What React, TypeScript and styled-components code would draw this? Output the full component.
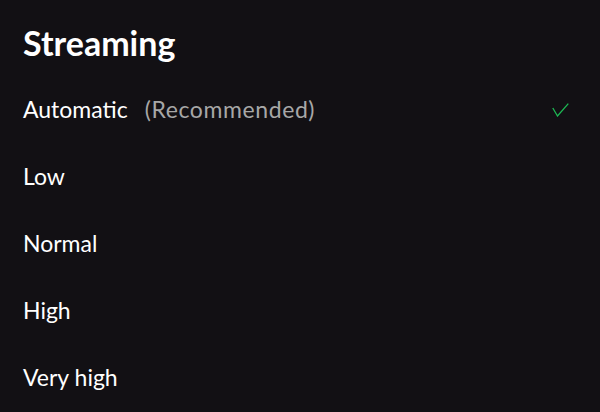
import React from 'react'
import styled, { createGlobalStyle } from 'styled-components'

const GlobalStyle = createGlobalStyle`
  html, body {
    margin: 0;
    padding: 0;
    background: #121014;
  }
  body {
    font-family: Lato, 'Liberation Sans', sans-serif;
    -webkit-font-smoothing: antialiased;
  }
`

const Screen = styled.main`
  width: 600px;
  height: 412px;
  background: #121014;
  box-sizing: border-box;
  padding: 23px 31px 0 23px;
  overflow: hidden;
`

const Title = styled.h1`
  margin: 0 0 13px;
  font-size: 34px;
  font-weight: 700;
  line-height: 40px;
  color: #ffffff;
`

const OptionList = styled.ul`
  list-style: none;
  margin: 0;
  padding: 0;
  display: flex;
  flex-direction: column;
`

const Option = styled.li`
  display: flex;
  align-items: center;
  height: 67px;
  line-height: 67px;
  font-size: 23px;
  color: #ffffff;
`

const Hint = styled.span`
  margin-left: 17px;
  letter-spacing: 0.6px;
  color: #a7a7a7;
`

const Check = styled.svg`
  margin-left: auto;
  width: 17px;
  height: 14px;
`

const options = ['Automatic', 'Low', 'Normal', 'High', 'Very high']

export default function App() {
  return (
    <Screen>
      <GlobalStyle />
      <Title>Streaming</Title>
      <OptionList>
        {options.map((name, i) => (
          <Option key={name}>
            {name}
            {i === 0 && <Hint>(Recommended)</Hint>}
            {i === 0 && (
              <Check viewBox="0 0 17 14">
                <path d="M0.8 5 L5.5 13 L16.3 0.6" fill="none" stroke="#1db954" strokeWidth="1.3" />
              </Check>
            )}
          </Option>
        ))}
      </OptionList>
    </Screen>
  )
}
